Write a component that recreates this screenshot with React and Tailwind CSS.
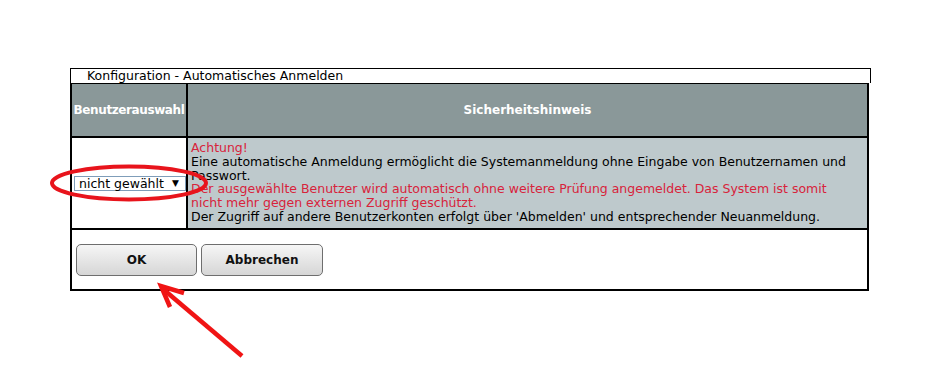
import React from "react";

export default function App() {
  const font = { fontFamily: '"DejaVu Sans", Verdana, sans-serif' };
  return (
    <div className="relative w-[936px] h-[377px] bg-white overflow-hidden" style={font}>
      <div className="pt-[68px] pl-[70px]">
        <div className="w-[801px] h-[15px] border border-black border-b-0 bg-white text-[12.5px] leading-[14px] text-black pl-[16px] whitespace-nowrap">
          Konfiguration - Automatisches Anmelden
        </div>
        <div className="w-[799px] border-2 border-t border-black bg-white">
          <div className="grid grid-cols-[116px_1fr] h-[54px] border-b-2 border-black bg-[#8a9899]">
            <div className="flex items-center justify-center border-r-2 border-black text-white font-bold text-[12px] tracking-[-0.4px] whitespace-nowrap overflow-hidden">
              Benutzerauswahl
            </div>
            <div className="flex items-center justify-center text-white font-bold text-[12px]">
              Sicherheitshinweis
            </div>
          </div>
          <div className="grid grid-cols-[116px_1fr] h-[92px] border-b-2 border-black">
            <div className="flex items-center pl-[2px] border-r-2 border-black bg-white">
              <div className="flex items-center w-[113px] h-[15px] border border-[#7f9db9] bg-white text-[12.5px] leading-[13px] text-black pl-[4px]">
                <span className="flex-1 whitespace-nowrap">nicht gewählt</span>
                <span className="text-[9px] pr-[6px]">▼</span>
              </div>
            </div>
            <div className="bg-[#bec9cc] pl-[3px] pt-[3px] text-[12.5px] leading-[13.8px] text-black whitespace-nowrap">
              <div className="text-[#d8233b]">Achtung!</div>
              <div>Eine automatische Anmeldung ermöglicht die Systemanmeldung ohne Eingabe von Benutzernamen und</div>
              <div>Passwort.</div>
              <div className="text-[#d8233b]">Der ausgewählte Benutzer wird automatisch ohne weitere Prüfung angemeldet. Das System ist somit</div>
              <div className="text-[#d8233b]">nicht mehr gegen externen Zugriff geschützt.</div>
              <div>Der Zugriff auf andere Benutzerkonten erfolgt über 'Abmelden' und entsprechender Neuanmeldung.</div>
            </div>
          </div>
          <div className="h-[59px] flex items-start gap-[4px] pl-[4px] pt-[14px]">
            <button className="w-[121px] h-[32px] rounded-[5px] border border-[#6e6e6e] bg-gradient-to-b from-[#f6f6f6] to-[#d6d6d6] text-[12px] font-bold text-[#111]">
              OK
            </button>
            <button className="w-[122px] h-[32px] rounded-[5px] border border-[#6e6e6e] bg-gradient-to-b from-[#f6f6f6] to-[#d6d6d6] text-[12px] font-bold text-[#111]">
              Abbrechen
            </button>
          </div>
        </div>
      </div>
      <svg className="absolute left-0 top-0 pointer-events-none" width="936" height="377">
        <ellipse cx="129" cy="183" rx="77" ry="16.5" fill="none" stroke="#e8141c" strokeWidth="4" />
        <line x1="242" y1="356" x2="163" y2="289" stroke="#f01414" strokeWidth="4.5" />
        <polyline points="184,293 161,286 170,307" fill="none" stroke="#f01414" strokeWidth="4.5" strokeLinejoin="miter" />
      </svg>
    </div>
  );
}
